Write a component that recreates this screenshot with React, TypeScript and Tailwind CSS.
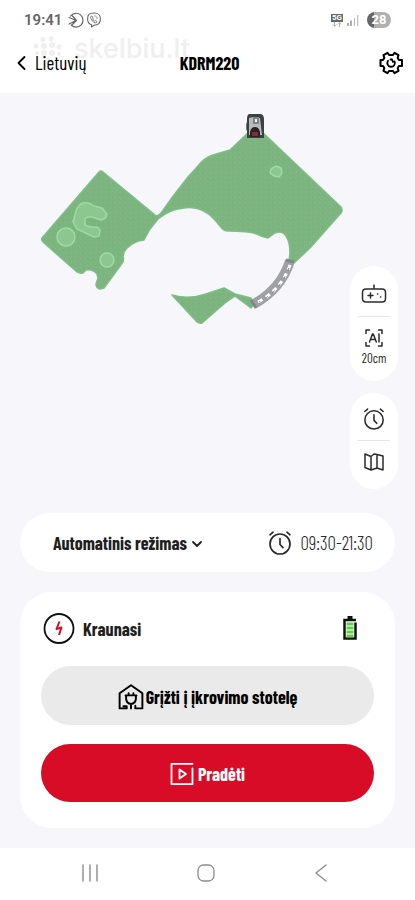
import type { ReactNode } from "react";

const stroke = {
  fill: "none",
  stroke: "currentColor",
  strokeLinecap: "round",
  strokeLinejoin: "round",
} as const;

function AlarmIcon({ className }: { className: string }) {
  return (
    <svg viewBox="0 0 24 24" className={className} {...stroke} strokeWidth={1.7} aria-hidden="true">
      <circle cx="12" cy="13" r="10" />
      <path d="M12 7.500v6l3 3.200M2 3.800l3-2.600M22 3.800l-3-2.600" />
    </svg>
  );
}

function StatusBar() {
  return (
    <div className="flex h-10 items-center justify-between pr-6 pl-6">
      <div className="flex items-center gap-[2px] text-[#666666]">
        <span className="mr-1 font-[Roboto,sans-serif] text-[15px] leading-5 font-semibold">19:41</span>
        <svg viewBox="0 0 16 16" className="size-4" {...stroke} strokeWidth={1.2} aria-hidden="true">
          <path d="M2.600 4A6.900 6.900 0 1 1 3.200 13M1 5.500l5.500 2.300q1.500.7 0 1.400L1 12M4 3.500l4.500 5-4.500 4.300" />
        </svg>
        <svg viewBox="0 0 16 16" className="size-4" {...stroke} strokeWidth={1.1} aria-hidden="true">
          <path d="M8 1c4.800 0 6.400 1.600 6.400 6s-1.600 6.200-6.400 6.200L5.600 15v-2.200C2.600 12 1.600 10.600 1.600 7 1.600 2.600 3.200 1 8 1Z" />
          <path d="M5 4.400c-.8.600-.6 1.700.6 3.500s2.800 3 4 3c.7 0 1.100-.7 1.300-1.300L9.400 8.500l-.9.700C7.600 8.700 7 8 6.600 7l.6-.9L6 4.200Z" strokeWidth=".9" />
          <path d="M8.400 3.800c1.800.2 2.800 1.300 2.800 3.100" strokeWidth=".7" />
        </svg>
      </div>
      <div className="flex items-center gap-1">
        <div className="flex flex-col items-center">
          <span className="h-2 bg-[#666666] px-[1px] font-[Roboto,sans-serif] text-[8px] leading-2 font-bold text-white">5G</span>
          <svg viewBox="0 0 10 5" className="h-[5px] w-[10px]" {...stroke} stroke="#b4b4b4" strokeWidth={1} aria-hidden="true">
            <path d="M2.500 0v4M1 2.800 2.500 4.300 4 2.800M7.500 5V1M6 2.200 7.500.7 9 2.200" />
          </svg>
        </div>
        <svg viewBox="0 0 12 12" className="size-3" aria-hidden="true">
          <path d="M1 9v3M4 6.500V12" stroke="#777777" strokeWidth="1.200" />
          <path d="M7.500 4v8M10.700 1v11" stroke="#bcbcbc" strokeWidth="1.200" />
        </svg>
        <span className="ml-1 h-4 w-6 rounded-full bg-linear-to-r from-[#666666] from-28% to-[#b0b0b0] to-28% text-center font-[Roboto,sans-serif] text-[13px] leading-4 font-bold text-white">
          28
        </span>
      </div>
    </div>
  );
}

function Watermark() {
  return (
    <div className="pointer-events-none absolute top-[35px] left-8 flex items-center gap-3 text-[#efefef]" aria-hidden="true">
      <svg viewBox="0 0 30 26" className="h-[26px] w-[30px]" fill="currentColor">
        <circle cx="11" cy="3.500" r="2.500" />
        <circle cx="19" cy="2.500" r="2.500" />
        <circle cx="4" cy="10" r="2.500" />
        <circle cx="12" cy="10" r="3" />
        <circle cx="20" cy="9" r="3" />
        <circle cx="27" cy="11" r="2.500" />
        <circle cx="5" cy="17" r="2" />
        <circle cx="12" cy="17" r="3" />
        <circle cx="20" cy="17" r="3" />
        <circle cx="27" cy="18" r="2" />
        <circle cx="16" cy="23" r="2" />
      </svg>
      <span className="font-[Inter,sans-serif] text-[27px] leading-7 font-medium">skelbiu.lt</span>
    </div>
  );
}

function Header() {
  return (
    <header className="relative bg-white pb-2">
      <Watermark />
      <div className="relative">
        <StatusBar />
        <div className="grid h-[45px] grid-cols-[1fr_auto_1fr] items-center pr-3 pl-4">
          <button type="button" className="flex items-center gap-2 justify-self-start text-[19px] leading-6">
            <svg viewBox="0 0 11 16" className="h-4 w-[11px]" {...stroke} strokeWidth={1.800} aria-hidden="true">
              <path d="M8.500 2 2.500 8l6 6" />
            </svg>
            Lietuvių
          </button>
          <h1 className="text-[18px] leading-6 font-bold">KDRM220</h1>
          <button type="button" aria-label="Nustatymai" className="justify-self-end">
            <svg viewBox="0 0 24 24" className="size-6" {...stroke} strokeWidth={2} aria-hidden="true">
              <path d="M8.500 1.800 10 4h4l1.500-2.200 4 2.400L18.700 7l1.300 2h3v6h-3l-1.300 2 .8 2.800-4 2.400L14 20h-4l-1.500 2.200-4-2.400.8-2.800L4 15H1.500V9H4l1.300-2-.8-2.800Z" />
              <path d="M9 9.800a3.800 3.800 0 1 0 6.600.6M11.500 8.500H13l1 2.500" strokeWidth="1.800" />
            </svg>
          </button>
        </div>
      </div>
    </header>
  );
}

function LawnMap() {
  return (
    <svg viewBox="0 93 415 400" className="block w-full" role="img" aria-label="Vejos žemėlapis">
      <defs>
        <pattern id="grass" width="5" height="5" patternUnits="userSpaceOnUse">
          <rect width="5" height="5" fill="#7db580" />
          <path d="M0 1h1M3 0h1M2 3h1M4 4h1" stroke="#76ae7a" />
          <path d="M1 2h1M4 2h1M0 4h1" stroke="#84bb87" />
        </pattern>
      </defs>
      <g fill="url(#grass)" stroke="#7fbd86" strokeWidth="1.500" strokeLinejoin="round">
        <path d="M99 172q2-2 4 0l52 43q3 2 6-2l13-18 14-18 10-11q6-8 15-11l17-5 20-19 10-1 81 77q2 3 0 6l-31 35-16 15-5-2 1-8q0-11-4-17-4-6-11-3l-7 5-7-2q-7-5-32-5c-7 0-7-3-14-11-8-9-17-14-31-12-9 1-18 4-26 11l-8 10-6 11q-10 1-17 8-4 4-4 9 1 2 0 5l-19 26-4 1q-4-1-4-5l2-6-1-4q-4-5-11-4l-3 3q-3 1-6-1l-34-30q-2-2-1-4Z" />
        <path d="M172 295q17 5 34-1l18-6 11 6 16 4 3 6-3 4-16-12-10 7-23 20q-2 1-5-1Z" />
      </g>
      <g fill="#8dc690" stroke="#9bdd9d" strokeWidth="1.500" strokeLinejoin="round">
        <circle cx="66" cy="237" r="9" />
        <circle cx="107" cy="260" r="7" />
        <path d="M83 203q6-1 11 3l8 2 5 6q-1 5-6 6l-9-3q-5-1-7 2v6q5 3 12 2l3 3-1 6-5 1q-8-4-17-8l-4-7 3-11q2-6 7-8Z" />
        <path d="m271 169 5-3 5 2 1 5-3 4-5-1-4-3Z" />
      </g>
      <path d="M290 261q-9 28-36 43" fill="none" stroke="#a0a0a7" strokeWidth="10" />
      <path d="m286 260 8 2M251 300l5 8" fill="none" stroke="#85858d" strokeWidth="3" />
      <path d="M290 265q-9 25-32 37" fill="none" stroke="#fff" strokeWidth="3" strokeDasharray="5 4" />
      <path d="M289 268q-9 23-30 34" fill="none" stroke="#77777f" strokeWidth="1" strokeDasharray="3 6" />
      <g>
        <rect x="246" y="121" width="18" height="11" rx="4" fill="#498570" />
        <path d="M249 114h12q3 1 3 5v19h-17v-19q0-4 2-5Z" fill="#3c4042" />
        <path d="M249 118q6-2 11 0l2 17h-13Z" fill="#b9babb" />
        <path d="M253 117h6v7h-6Z" fill="#808386" />
        <path d="M255 119h2v3h-2Z" fill="#f1f1f1" />
        <path d="M250 137v-5q1-5 5-5t5 5v5Z" fill="#302024" />
        <path d="M252 132h6v4h-6Z" fill="#79303b" />
      </g>
    </svg>
  );
}

function ToolGroup({ children }: { children: ReactNode }) {
  return <div className="flex w-12 flex-col items-center rounded-3xl bg-white py-2">{children}</div>;
}

function MapTools() {
  return (
    <div className="absolute top-[173px] right-[17px] flex flex-col gap-3 text-[#2b2b2b]">
      <ToolGroup>
        <button type="button" aria-label="Valdymas" className="flex h-[42px] w-full items-center justify-center">
          <svg viewBox="0 0 26 22" className="h-[22px] w-[26px]" {...stroke} strokeWidth={1.500} aria-hidden="true">
            <path d="M13 1v4M5 5h16q3.500 0 3.500 3.500v6q0 3.500-3.500 3.500H5q-3.500 0-3.500-3.500v-6Q1.500 5 5 5ZM9.500 9v5M7 11.500h5M16.500 10h.3M19.500 13h.3" />
          </svg>
        </button>
        <span className="h-px w-8 bg-[#e5e5e5]" />
        <button type="button" className="flex h-[56px] w-full flex-col items-center pt-[11px] text-[13px] leading-5">
          <svg viewBox="0 0 20 20" className="size-5" {...stroke} strokeWidth={1.500} aria-hidden="true">
            <path d="M2 5.500V2h3.500M14.500 2H18v3.500M18 14.500V18h-3.500M5.500 18H2v-3.500" />
            <path d="m5.500 14 3-8h.8l3 8M6.500 11.500h4.800M15 6v8" />
          </svg>
          20cm
        </button>
      </ToolGroup>
      <ToolGroup>
        <button type="button" aria-label="Grafikas" className="flex h-[39px] w-full items-center justify-center pb-1">
          <AlarmIcon className="size-[22px]" />
        </button>
        <span className="h-px w-8 bg-[#e5e5e5]" />
        <button type="button" aria-label="Žemėlapis" className="flex h-[40px] w-full items-center justify-center pt-[2px]">
          <svg viewBox="0 0 22 20" className="h-5 w-[22px]" {...stroke} strokeWidth={1.500} aria-hidden="true">
            <path d="m2 2 6 2.500V18l-6-2.500ZM8 4.500 11 2l3 .5V16l-6 2M14 2.500l6 1.500v14l-6-2" />
          </svg>
        </button>
      </ToolGroup>
    </div>
  );
}

function ModeCard() {
  return (
    <section className="flex h-[59px] items-center justify-between rounded-full bg-white pr-[22px] pl-[33px]">
      <button type="button" className="flex items-center gap-1 text-[18px] leading-6 font-bold text-[#1f1f1f]">
        Automatinis režimas
        <svg viewBox="0 0 12 10" className="h-[10px] w-3" {...stroke} strokeWidth={1.800} aria-hidden="true">
          <path d="m2 4 4 4 4-4" />
        </svg>
      </button>
      <div className="flex items-center gap-2 text-[19px] leading-6 font-light text-[#2b2b2b]">
        <AlarmIcon className="size-6" />
        09:30-21:30
      </div>
    </section>
  );
}

function ChargeCard() {
  return (
    <section className="rounded-[32px] bg-white px-[21px] pt-5 pb-[26px]">
      <div className="flex h-8 items-center justify-between pr-[17px] pl-[2px]">
        <div className="flex items-center gap-2">
          <svg viewBox="0 0 32 32" className="size-8" fill="none" aria-hidden="true">
            <circle cx="16" cy="16.500" r="14.500" stroke="#111" strokeWidth="1.800" />
            <path d="m16.500 9.500-3 7.500 5-1.500-2.500 7.500" stroke="#d80c26" strokeWidth="2" strokeLinejoin="round" />
          </svg>
          <h2 className="pt-[2px] text-[18px] leading-6 font-bold text-[#1f1f1f]">Kraunasi</h2>
        </div>
        <svg viewBox="0 0 14 24" className="h-6 w-[14px]" role="img" aria-label="Baterija">
          <path d="M4.500 1.500h5" stroke="#111" strokeWidth="3" />
          <path d="M13 4H1.500v18.500h11V6.500" fill="none" stroke="#111" strokeWidth="2.500" />
          <path d="M3.500 8h7M3.500 12h7M3.500 16h7M3.500 20h7" stroke="#62d044" strokeWidth="3" />
        </svg>
      </div>
      <div className="mt-[22px] flex flex-col gap-[19px] text-[18px] leading-6 font-bold">
        <button type="button" className="flex h-[59px] items-center justify-center gap-[2px] rounded-full bg-[#eaeaea] pt-[2px] text-black">
          <svg viewBox="0 0 24 24" className="size-[26px]" {...stroke} strokeWidth={1.800} aria-hidden="true">
            <path d="M8 22.500H1.500V8.500L12 1.200l10.500 7.300v14H16v-2.500M8 22.500v-2H5" />
            <path d="M7 10.500h10M7.500 10.500V14q.5 4 4.500 4.500 4-.5 4.500-4.500v-3.500M9.800 8.500v2M14.200 8.500v2M12 18.500v4" />
          </svg>
          Grįžti į įkrovimo stotelę
        </button>
        <button type="button" className="flex h-[58px] items-center justify-center gap-1 rounded-full bg-[#d80c26] pt-[2px] text-white">
          <svg viewBox="0 0 24 24" className="size-6" {...stroke} strokeWidth={1.800} aria-hidden="true">
            <path d="M22.500 1.800h-21v20.400h21V6.500M9.500 7.500v9l6.500-4.500Z" />
          </svg>
          Pradėti
        </button>
      </div>
    </section>
  );
}

function NavBar() {
  return (
    <nav className="grid h-[52px] grid-cols-[1fr_52px_1fr] items-center bg-white pr-1 pb-[2px] text-[#8c8c8c]">
      <button type="button" aria-label="Naujausios" className="justify-self-center">
        <svg viewBox="0 0 18 18" className="size-[18px]" {...stroke} strokeWidth={1.400} aria-hidden="true">
          <path d="M2 1v16M9 1v16M16 1v16" />
        </svg>
      </button>
      <button type="button" aria-label="Pradžia" className="justify-self-center">
        <svg viewBox="0 0 18 18" className="size-[18px]" {...stroke} strokeWidth={1.300} aria-hidden="true">
          <rect x="1" y="1" width="16" height="16" rx="5.500" />
        </svg>
      </button>
      <button type="button" aria-label="Atgal" className="justify-self-center">
        <svg viewBox="0 0 18 18" className="size-[18px]" {...stroke} strokeWidth={1.400} aria-hidden="true">
          <path d="M14 1 4 9l10 8" />
        </svg>
      </button>
    </nav>
  );
}

export default function App() {
  return (
    <div className="flex min-h-screen flex-col bg-[#f6f6fb] font-['Barlow_Condensed','Roboto_Condensed','Liberation_Sans_Narrow','Open_Sans_Condensed','DejaVu_Sans_Condensed',sans-serif] text-black">
      <Header />
      <main className="relative flex flex-1 flex-col">
        <div className="flex-1">
          <LawnMap />
        </div>
        <MapTools />
        <div className="flex flex-col gap-5 px-5 pt-5 pb-5">
          <ModeCard />
          <ChargeCard />
        </div>
      </main>
      <NavBar />
    </div>
  );
}
